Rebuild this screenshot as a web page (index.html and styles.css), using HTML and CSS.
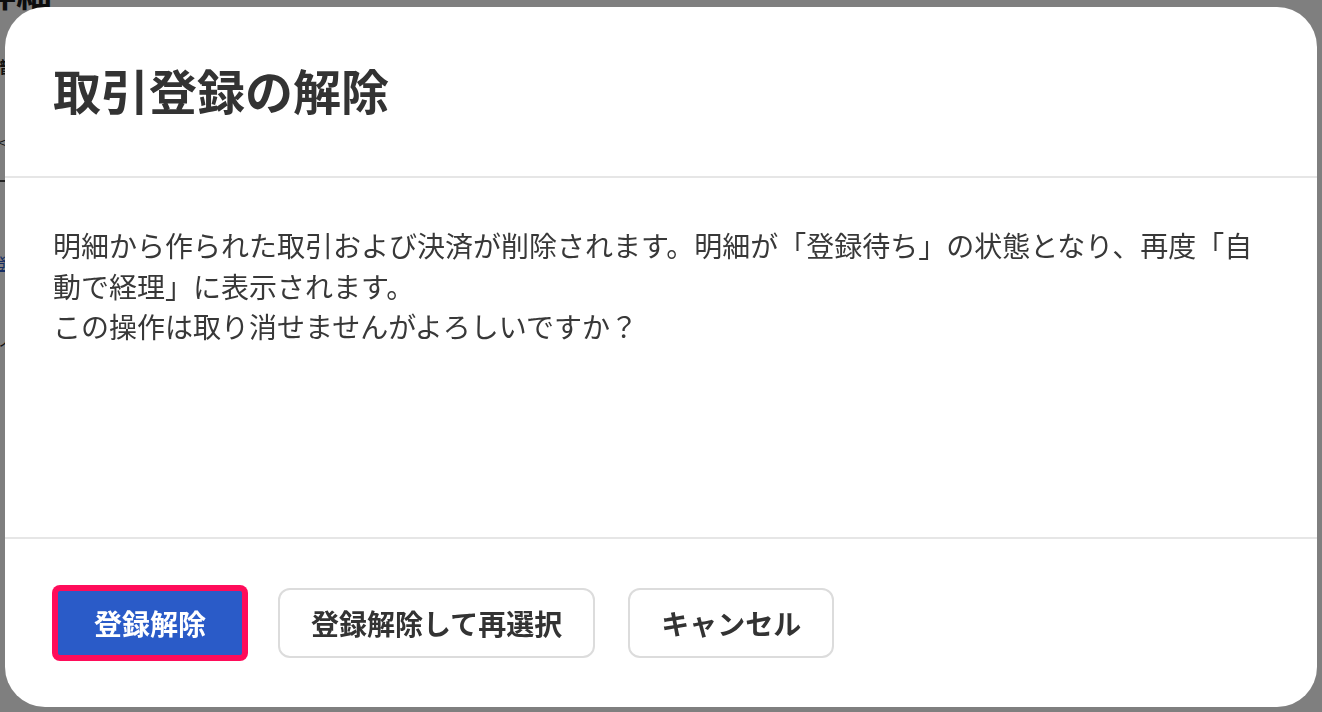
FILE: index.html
```html
<!DOCTYPE html>
<html lang="ja">
<head>
<meta charset="utf-8">
<title>取引登録の解除</title>
<link rel="stylesheet" href="styles.css">
</head>
<body>
<div class="page" aria-hidden="true">
  <div class="page-title">詳細</div>
  <div class="page-side">
    <span class="side-text">譜</span>
    <span class="side-mark">&lt;</span>
    <span class="side-rule"></span>
    <span class="side-link">登</span>
    <span class="side-mark">ノ</span>
  </div>
</div>
<div class="overlay">
  <div class="modal" role="dialog" aria-labelledby="modal-title">
    <div class="modal-header">
      <h2 class="modal-title" id="modal-title">取引登録の解除</h2>
    </div>
    <div class="modal-body">
      <p>明細から作られた取引および決済が削除されます。明細が「登録待ち」の状態となり、再度「自動で経理」に表示されます。<br>この操作は取り消せませんがよろしいですか？</p>
    </div>
    <div class="modal-footer">
      <button class="btn btn-primary" type="button">登録解除</button>
      <button class="btn btn-secondary" type="button">登録解除して再選択</button>
      <button class="btn btn-secondary" type="button">キャンセル</button>
    </div>
  </div>
</div>
</body>
</html>
```
FILE: styles.css
```css
* {
  box-sizing: border-box;
}

html,
body {
  margin: 0;
  padding: 0;
}

body {
  width: 1322px;
  height: 712px;
  overflow: hidden;
  background: #ffffff;
  font-family: "Noto Sans CJK JP", "Noto Sans", sans-serif;
  color: #333333;
}

/* background page (under the overlay) */
.page {
  height: 712px;
  display: flex;
  flex-direction: column;
}

.page-title {
  margin: -30px 0 0 -20px;
  font-size: 36px;
  line-height: 42px;
  font-weight: 700;
  color: #1a1a1a;
}

.page-side {
  display: flex;
  flex-direction: column;
  align-items: flex-start;
}

.side-text {
  margin: 44px 0 0 -6px;
  font-size: 16px;
  line-height: 20px;
  font-weight: 700;
  color: #222;
}

.side-mark {
  margin: 58px 0 0 -2px;
  font-size: 14px;
  line-height: 16px;
  color: #222;
}

.side-rule {
  margin-top: 30px;
  width: 10px;
  height: 2px;
  background: #444;
}

.side-link {
  margin: 70px 0 0 -8px;
  font-size: 16px;
  line-height: 22px;
  color: #2a5bc8;
  text-decoration: underline;
}

/* overlay + modal */
.overlay {
  position: fixed;
  inset: 0;
  background: rgba(0, 0, 0, 0.5);
  padding: 7px 5px 5px 5px;
  display: flex;
}

.modal {
  flex: 1;
  background: #ffffff;
  border-radius: 40px;
  display: flex;
  flex-direction: column;
  overflow: hidden;
}

.modal-header {
  height: 171px;
  padding: 54px 48px 0;
  border-bottom: 2px solid #e6e6e6;
}

.modal-title {
  margin: 0;
  font-size: 48px;
  line-height: 56px;
  font-weight: 700;
  color: #333333;
}

.modal-body {
  flex: 1;
  padding: 47px 48px 0;
}

.modal-body p {
  margin: 0;
  font-size: 28px;
  line-height: 40.5px;
  font-weight: 400;
  color: #383838;
}

.modal-footer {
  height: 170px;
  border-top: 2px solid #e6e6e6;
  padding: 0 50px;
  display: flex;
  align-items: center;
  gap: 33px;
}

.btn {
  height: 70px;
  font-family: inherit;
  font-size: 28px;
  line-height: 1;
  font-weight: 700;
  cursor: pointer;
  white-space: nowrap;
}

.btn-primary {
  padding: 0 36px;
  background: #2a5bc8;
  color: #ffffff;
  border: 3px solid #ff0c5a;
  border-radius: 5px;
  box-shadow: 0 0 0 3px #ff0c5a;
}

.btn-secondary {
  padding: 0 31px;
  background: #ffffff;
  color: #333333;
  border: 2px solid #dcdcdc;
  border-radius: 12px;
}
```
